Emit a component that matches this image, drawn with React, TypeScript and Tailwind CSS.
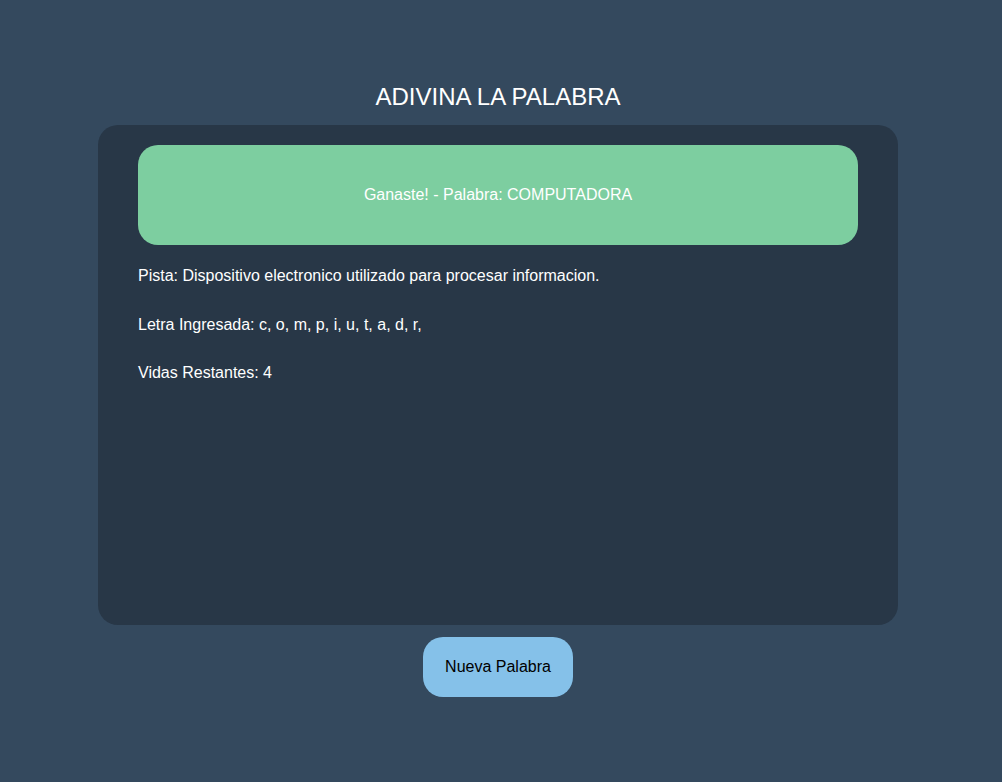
import React from "react";

export default function App() {
  return (
    <div
      className="min-h-screen w-full bg-[#34495e] flex flex-col items-center pt-[83px] pr-[6px]"
      style={{ fontFamily: '"Liberation Sans", Arial, sans-serif' }}
    >
      <h1 className="text-[24px] leading-[28px] text-white font-normal">ADIVINA LA PALABRA</h1>
      <div className="mt-[14px] w-[800px] h-[500px] rounded-[20px] bg-[#283747] px-[40px] pt-[20px]">
        <div className="h-[100px] rounded-[20px] bg-[#7dcea0] flex items-center justify-center text-white text-[16px] leading-[18px]">
          Ganaste! - Palabra: COMPUTADORA
        </div>
        <div className="mt-[22px] flex flex-col gap-[30.5px] text-white text-[16px] leading-[18px]">
          <p>Pista: Dispositivo electronico utilizado para procesar informacion.</p>
          <p>Letra Ingresada: c, o, m, p, i, u, t, a, d, r,</p>
          <p>Vidas Restantes: 4</p>
        </div>
      </div>
      <button className="mt-[12px] w-[150px] h-[60px] rounded-[20px] bg-[#85c1e9] text-black text-[16px] leading-[18px]">
        Nueva Palabra
      </button>
    </div>
  );
}
